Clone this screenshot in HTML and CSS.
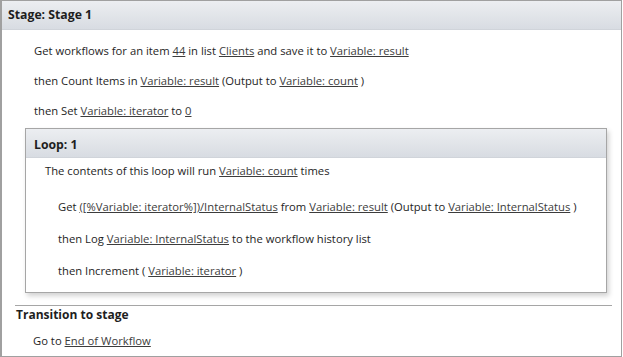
FILE: index.html
```html
<!DOCTYPE html>
<html lang="en">
<head>
    <meta charset="UTF-8">
    <title>Stage 1</title>
    <link rel="stylesheet" href="styles.css">
</head>
<body>
    <div class="stage">
        <div class="stage-header">Stage: Stage 1</div>
        <div class="stage-body">
            <p class="step">Get workflows for an item <a>44</a> in list <a>Clients</a> and save it to <a>Variable: result</a></p>
            <p class="step">then Count Items in <a>Variable: result</a> (Output to <a>Variable: count</a> )</p>
            <p class="step">then Set <a>Variable: iterator</a> to <a>0</a></p>

            <div class="loop">
                <div class="loop-header">Loop: 1</div>
                <div class="loop-body">
                    <p class="loop-intro">The contents of this loop will run <a>Variable: count</a> times</p>
                    <p class="step">Get <a>([%Variable: iterator%])/InternalStatus</a> from <a>Variable: result</a> (Output to <a>Variable: InternalStatus</a> )</p>
                    <p class="step">then Log <a>Variable: InternalStatus</a> to the workflow history list</p>
                    <p class="step">then Increment ( <a>Variable: iterator</a> )</p>
                </div>
            </div>
        </div>

        <div class="transition">
            <div class="transition-title">Transition to stage</div>
            <p class="step">Go to <a>End of Workflow</a></p>
        </div>
    </div>
</body>
</html>
```

FILE: styles.css
```css
body {
    margin: 0;
    font-family: "Open Sans", "Noto Sans", sans-serif;
    font-size: 11.25px;
    color: #1e1e1e;
    background: #fff;
}

a {
    color: #3c3c3c;
    text-decoration: underline;
}

p {
    margin: 0;
}

.stage {
    width: 619px;
    height: 355px;
    border: 1px solid #a0a0a0;
    border-left-width: 2px;
}

.stage-header {
    height: 28px;
    line-height: 28px;
    padding-left: 6px;
    font-weight: bold;
    font-size: 12.25px;
    background: linear-gradient(#eceef1, #d8dce2);
    border-bottom: 1px solid #d0d4da;
}

.stage-body {
    padding: 13px 0 0 32px;
    display: flex;
    flex-direction: column;
    gap: 14px;
}

.step,
.loop-intro {
    line-height: 16px;
}

.loop {
    margin: -5px 14px 0 -9px;
    border: 1px solid #a6a6a6;
    box-shadow: 2px 3px 5px rgba(0, 0, 0, 0.18);
}

.loop-header {
    height: 28px;
    line-height: 32px;
    padding-left: 8px;
    font-weight: bold;
    font-size: 12.25px;
    background: linear-gradient(#eceef1, #d8dce2);
    border-bottom: 1px solid #d0d4da;
}

.loop-body {
    padding: 5px 0 13px 19px;
    display: flex;
    flex-direction: column;
    gap: 16px;
}

.loop-body .step {
    margin-left: 13px;
}

.loop-intro {
    margin-bottom: 4px;
}

.transition {
    margin: 12px 9px 0 13px;
    border-top: 1px solid #a6a6a6;
}

.transition-title {
    font-weight: bold;
    font-size: 12px;
    line-height: 18px;
    padding-left: 1px;
}

.transition .step {
    padding: 9px 0 0 18px;
}
```
